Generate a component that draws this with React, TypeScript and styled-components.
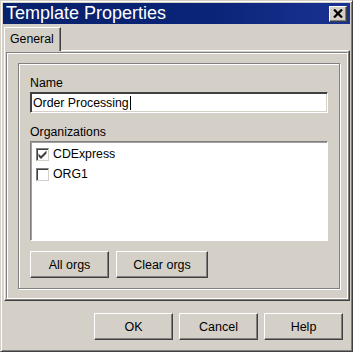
import styled, { createGlobalStyle } from "styled-components";

const GlobalStyle = createGlobalStyle`
  html, body {
    margin: 0;
    padding: 0;
    background: #d4d0c8;
  }
  * {
    box-sizing: border-box;
  }
`;

const Window = styled.div`
  width: 353px;
  height: 352px;
  display: flex;
  flex-direction: column;
  padding: 2px;
  background: #d4d0c8;
  border: 1px solid;
  border-color: #d4d0c8 #404040 #404040 #d4d0c8;
  box-shadow: inset 1px 1px 0 #fff, inset -1px -1px 0 #808080;
  font-family: "Liberation Sans", Arial, sans-serif;
  font-size: 12.3px;
  color: #000;
`;

const TitleBar = styled.div`
  height: 21px;
  display: flex;
  align-items: center;
  justify-content: space-between;
  padding: 0 3px 0 3px;
  background: linear-gradient(to right, #08216b, #0a2478 60%, #1a3394);
`;

const Title = styled.div`
  color: #fff;
  font-size: 18px;
  line-height: 21px;
  white-space: nowrap;
`;

const CloseButton = styled.div`
  width: 18px;
  height: 16px;
  display: flex;
  align-items: center;
  justify-content: center;
  background: #d4d0c8;
  border: 1px solid;
  border-color: #fff #404040 #404040 #fff;
  box-shadow: inset -1px -1px 0 #808080;
`;

const TabArea = styled.div`
  margin: 3px 0 0 1px;
  width: 346px;
  display: flex;
  flex-direction: column;
`;

const TabStrip = styled.div`
  display: flex;
  height: 23px;
  position: relative;
  z-index: 1;
`;

const Tab = styled.div`
  height: 24px;
  padding: 4px 6px 0 5px;
  background: #d4d0c8;
  border-top: 1px solid #fff;
  border-left: 1px solid #fff;
  border-right: 1px solid #404040;
  border-top-left-radius: 2px;
  box-shadow: inset -1px 0 0 #808080;
  line-height: 15px;
`;

const Panel = styled.div`
  height: 251px;
  padding: 1px;
  border: 1px solid;
  border-color: #fff #404040 #404040 #fff;
  box-shadow: inset -1px -1px 0 #808080;
`;

const PanelInner = styled.div`
  height: 100%;
  padding: 10px 7px 9px 11px;
  border: 1px solid #808080;
  border-right-color: #fff;
  border-bottom-color: #fff;
  box-shadow: inset 1px 1px 0 #fff;
`;

const GroupBox = styled.div`
  height: 100%;
  display: flex;
  flex-direction: column;
  padding: 12px 11px 10px 11px;
  border: 1px solid #808080;
  box-shadow: inset 1px 1px 0 #fff, 1px 1px 0 #fff;
`;

const Label = styled.div<{ $gap?: number }>`
  line-height: 15px;
  margin-top: ${(p) => p.$gap ?? 0}px;
  margin-bottom: 1px;
`;

const TextField = styled.div`
  height: 21px;
  display: flex;
  align-items: center;
  padding: 0 2px;
  background: #fff;
  border: 1px solid;
  border-color: #404040 #fff #fff #404040;
  box-shadow: inset 1px 1px 0 #404040, inset -1px -1px 0 #d4d0c8;
  white-space: nowrap;
`;

const Caret = styled.span`
  display: inline-block;
  width: 1px;
  height: 14px;
  background: #000;
  margin-left: 1px;
`;

const ListBox = styled.div`
  height: 100px;
  padding: 2px 5px;
  background: #fff;
  border: 1px solid;
  border-color: #808080 #fff #fff #808080;
  box-shadow: inset 1px 1px 0 #a0a0a0;
`;

const ListRow = styled.div`
  height: 20px;
  display: flex;
  align-items: center;
  gap: 4px;
`;

const CheckBox = styled.div`
  width: 13px;
  height: 13px;
  display: flex;
  align-items: center;
  justify-content: center;
  background: #fff;
  border: 1px solid;
  border-color: #808080 #d4d0c8 #d4d0c8 #808080;
  box-shadow: inset 1px 1px 0 #404040;
`;

const ButtonRow = styled.div<{ $gap: number; $end?: boolean }>`
  display: flex;
  gap: ${(p) => p.$gap}px;
  justify-content: ${(p) => (p.$end ? "flex-end" : "flex-start")};
`;

const Button = styled.div<{ $width: number }>`
  width: ${(p) => p.$width}px;
  height: 27px;
  display: flex;
  align-items: center;
  justify-content: center;
  background: #d4d0c8;
  border: 1px solid;
  border-color: #fff #404040 #404040 #fff;
  box-shadow: inset -1px -1px 0 #808080;
  font-size: 12.5px;
`;

const Footer = styled.div`
  margin-top: 12px;
  padding-right: 7px;
`;

const Spacer = styled.div`
  flex: 1;
`;

function CheckMark() {
  return (
    <svg width="9" height="9" viewBox="0 0 9 9">
      <path d="M0.5 3.5 L3 6 L8.5 0.5 L8.5 3.5 L3 9 L0.5 6.5 Z" fill="#404040" />
    </svg>
  );
}

function CloseGlyph() {
  return (
    <svg width="10" height="9" viewBox="0 0 10 9">
      <path d="M1 0.5 L9 8.5 M9 0.5 L1 8.5" stroke="#000" strokeWidth="2.2" />
    </svg>
  );
}

export default function App() {
  return (
    <>
      <GlobalStyle />
      <Window>
        <TitleBar>
          <Title>Template Properties</Title>
          <CloseButton>
            <CloseGlyph />
          </CloseButton>
        </TitleBar>
        <TabArea>
          <TabStrip>
            <Tab>General</Tab>
          </TabStrip>
          <Panel>
            <PanelInner>
              <GroupBox>
                <Label>Name</Label>
                <TextField>
                  Order Processing
                  <Caret />
                </TextField>
                <Label $gap={12}>Organizations</Label>
                <ListBox>
                  <ListRow>
                    <CheckBox>
                      <CheckMark />
                    </CheckBox>
                    CDExpress
                  </ListRow>
                  <ListRow>
                    <CheckBox />
                    ORG1
                  </ListRow>
                </ListBox>
                <Spacer />
                <ButtonRow $gap={7}>
                  <Button $width={79}>All orgs</Button>
                  <Button $width={92}>Clear orgs</Button>
                </ButtonRow>
              </GroupBox>
            </PanelInner>
          </Panel>
        </TabArea>
        <Footer>
          <ButtonRow $gap={6} $end>
            <Button $width={79}>OK</Button>
            <Button $width={79}>Cancel</Button>
            <Button $width={79}>Help</Button>
          </ButtonRow>
        </Footer>
      </Window>
    </>
  );
}
